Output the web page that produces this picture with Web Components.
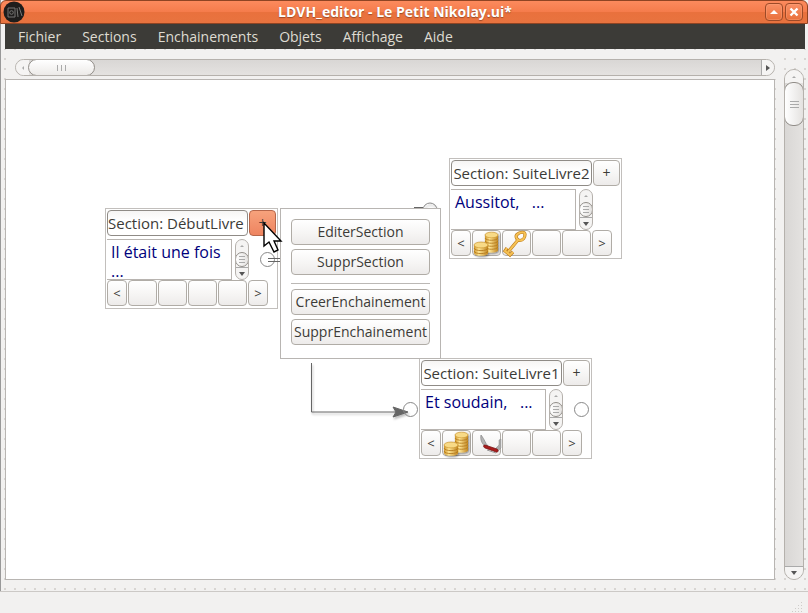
<!DOCTYPE html>
<html lang="fr">
<head>
<meta charset="utf-8">
<title>LDVH_editor - Le Petit Nikolay.ui*</title>
<style>
html, body { height: 100%; margin: 0; }
body { font: 15px/20px "Open Sans", "Noto Sans", sans-serif; color: #3c3b37; background: #f2f1f0; overflow: hidden; }
</style>
</head>
<body>
<ldvh-window></ldvh-window>
<script>
const define = (name, html, setup) => customElements.define(name, class extends HTMLElement {
  connectedCallback() {
    if (this.shadowRoot) return;
    const t = document.createElement('template');
    t.innerHTML = html;
    this.attachShadow({ mode: 'open' }).append(t.content.cloneNode(true));
    if (setup) setup(this, this.shadowRoot);
  }
});

const icons = {
  coins: `<defs><linearGradient id="g"><stop offset="0" stop-color="#cf9426"/><stop offset=".35" stop-color="#ffe695"/><stop offset="1" stop-color="#c08420"/></linearGradient><filter id="s" x="-.3" y="-.3" width="1.6" height="1.6"><feDropShadow dx="1" dy="1" stdDeviation="1.2" flood-opacity=".5"/></filter></defs>
    <g filter="url(#s)"><path d="M12 4v15c0 3.500 13 3.500 13 0V4z" fill="url(#g)"/>
    <path d="M12 7c1 3 12 3 13 0M12 10c1 3 12 3 13 0M12 13c1 3 12 3 13 0M12 16c1 3 12 3 13 0" fill="none" stroke="#b57c1e" stroke-width=".9"/>
    <ellipse cx="18.500" cy="4" rx="6.500" ry="2.800" fill="#f8da86" stroke="#cf9a35" stroke-width=".7"/>
    <path d="M1 14v8c1 4 14 3.500 14 0v-8z" fill="url(#g)"/>
    <path d="M1 17c1 3.500 13 3.500 14 0M1 20c1 3.500 13 3.500 14 0" fill="none" stroke="#b57c1e" stroke-width=".9"/>
    <ellipse cx="8" cy="14" rx="7" ry="2.900" fill="#f8da86" stroke="#cf9a35" stroke-width=".7"/></g>`,
  key: `<g fill="none" stroke="#b9781a" stroke-width="3.200"><path d="M14 3.500c3-3 8-3 8 0s-2 6-5 6-5-4-3-6z"/><path d="M15 9 5 21M4 17l-2 3 5 4 3-3"/></g>
    <g fill="none" stroke="#f6c254" stroke-width="2"><path d="M14 3.500c3-3 8-3 8 0s-2 6-5 6-5-4-3-6z"/><path d="M15 9 5 21M4 17l-2 3 5 4 3-3"/></g>`,
  knife: `<path d="M8 4c-1 5 1 9 5 12l2-1C12 12 12 9 8 4z" fill="#b4b4b4" stroke="#858585" stroke-width=".7"/><path d="m23 17 3-3V9l2-1v9l-3 3z" fill="#aaa" stroke="#888" stroke-width=".5"/><path d="m12 14 12 4c2 1 1 4-1 3l-11-4c-2-1-2-3 0-3z" fill="#a81c1c" stroke="#701010" stroke-width=".7"/><path d="m14 19 9 3" stroke="#999"/>`
};
const face = `border:1px solid #b0aca6; border-radius:4px; background:linear-gradient(#fff,#f6f5f4 55%,#edebea); color:#3c3b37; font:inherit; padding:0; box-sizing:border-box; margin:0;`;

define('title-bar', `<style>
  :host { display:flex; align-items:center; height:24px; box-sizing:border-box; padding:0 4px 0 2px;
    border:1px solid #8f4423; border-radius:6px 6px 0 0; background:linear-gradient(#fc8a5d,#f57c4c 48%,#e9713d 52%,#e8733f); color:#fff; }
  h1 { flex:1; text-align:center; margin:0; font:bold 14px/22px "Open Sans","Noto Sans",sans-serif; text-shadow:0 1px 1px #9a4a28; white-space:nowrap; }
  .app { width:22px; height:22px; }
  nav { display:flex; gap:2px; }
  button { width:18px; height:18px; padding:0; border:1px solid #9c4a28; border-radius:4px; background:linear-gradient(#fa9066,#e9703b); box-shadow:inset 0 0 0 1px #ffa47c66; }
  button svg { display:block; }
</style>
<svg class="app" viewBox="0 0 22 22"><circle cx="11" cy="11" r="10.500" fill="#1e1d1c"/><g fill="none" stroke="#777775"><path d="M5 7h7v9H5zM14 7l1 9M16 6l3 9"/><circle cx="8.500" cy="11.500" r="1.800"/></g></svg>
<h1><slot></slot></h1>
<nav><button aria-label="Agrandir"><svg width="16" height="16"><path d="M4 10h8L8 6z" fill="#fff"/></svg></button><button aria-label="Fermer"><svg width="16" height="16"><path d="m4.500 4.500 7 7m0-7-7 7" stroke="#fff" stroke-width="2.400"/></svg></button></nav>`);

define('menu-bar', `<style>
  :host { display:flex; gap:21px; height:25px; padding:0 13px; margin:0 3px 0 5px; background:#3c3b37; }
  ::slotted(button) { border:0; padding:0; background:none; color:#dfdbd2; font:14px/25px "Open Sans","Noto Sans",sans-serif; }
</style><slot></slot>`);

define('scroll-bar', `<style>
  :host { display:flex; box-sizing:border-box; border:1px solid #b5b1ac; border-radius:10px; background:linear-gradient(#d9d7d5,#e4e2e0); overflow:hidden; }
  :host([vertical]) { flex-direction:column; background:linear-gradient(90deg,#d9d7d5,#e4e2e0); }
  button { flex:none; display:grid; place-items:center; width:13px; padding:0; border:0; background:#f5f4f3; color:#aaa; }
  button:last-child { color:#555; border-left:1px solid #aaa; border-radius:0; }
  :host([vertical]) button { width:100%; height:13px; }
  :host([vertical]) button:last-child { border-left:0; border-top:1px solid #aaa; }
  .thumb { flex:none; width:67px; display:grid; place-items:center; box-sizing:border-box; border:1px solid #918d88; border-radius:9px; background:linear-gradient(#fff,#eceae8); margin:-1px 0 -1px -1px; }
  :host([vertical]) .thumb { width:auto; height:44px; margin:-1px -1px 0; background:linear-gradient(90deg,#fff,#e4e2e0); }
  .grip { width:9px; height:6px; background:repeating-linear-gradient(90deg,#aaa 0 1px,transparent 1px 4px); }
  :host([vertical]) .grip { height:7px; background:repeating-linear-gradient(#aaa 0 1px,transparent 1px 3px); }
  .track { flex:1; }
  :host([mini]) button { height:12px; background:none; border:0; }
  :host([mini]) { background:#f5f4f3; border-radius:8px; justify-content:space-between; }
  :host([mini]) .thumb { height:15px; border-radius:8px; }
  :host([mini]) .grip { width:6px; }
  :host([mini]) .track { display:none; }
</style>
<button tabindex="-1" aria-label="Début"><svg class="a" width="6" height="6"></svg></button><div class="thumb"><i class="grip"></i></div><div class="track"></div><button tabindex="-1" aria-label="Fin"><svg class="b" width="6" height="6"></svg></button>`,
(host, root) => {
  const v = host.hasAttribute('vertical');
  root.querySelector('.a').innerHTML = `<path fill="currentColor" d="${v ? 'M1 4h4L3 2z' : 'M4 1v4L2 3z'}"/>`;
  root.querySelector('.b').innerHTML = `<path fill="currentColor" d="${v ? 'M0 1h6L3 5z' : 'M1 0v6l4-3z'}"/>`;
});

define('section-card', `<style>
  :host { display:block; position:absolute; width:173px; box-sizing:border-box; border:1px solid #c2bfbc; padding:1px 1px 2px; background:#fff; }
  button { ${face} flex:none; }
  .head { display:flex; gap:1px; height:26px; }
  .name { width:141px; font-size:15px; border-color:#8f8b86; background:linear-gradient(#f6f5f4,#fff 40%); white-space:nowrap; }
  :host([flush]) .name { text-align:left; }
  .plus { flex:1; font-size:14px; }
  :host([active]) .plus { background:linear-gradient(#f7a27c,#ee8460); border-color:#b6664a; }
  .body { display:flex; gap:3px; height:41px; margin:3px 0 0; }
  textarea { width:125px; box-sizing:border-box; margin:0; padding:3px 0 0 4px; border:solid #b8b4b0; border-width:1px 1px 1px 0; resize:none; overflow:hidden; background:#fff; color:#00007c; font:500 16px/19px "Open Sans","Noto Sans",sans-serif; }
  scroll-bar { width:14px; }
  .items { display:flex; gap:1px; height:26px; }
  .items button { width:29px; }
  .items .nav { width:20px; font-size:13px; }
  .items svg { display:block; overflow:visible; }
  .port { position:absolute; width:13px; height:13px; border:1px solid #888; border-radius:50%; right:2px; top:43px; }
  .in { right:auto; left:-17px; }
</style>
<div class="head"><button class="name"></button><button class="plus">+</button></div>
<div class="body"><textarea readonly aria-label="Texte de la section"></textarea><scroll-bar vertical mini></scroll-bar></div>
<div class="items"></div>`,
(host, root) => {
  root.querySelector('.name').textContent = host.getAttribute('name');
  root.querySelector('textarea').value = host.getAttribute('text');
  const list = (host.getAttribute('items') || '').split(' ');
  root.querySelector('.items').innerHTML = '<button class="nav" aria-label="Précédent">&lt;</button>' +
    [0, 1, 2, 3].map(i => `<button aria-label="${list[i] || 'Objet vide'}">${icons[list[i]] ? `<svg width="27" height="26" viewBox="0 0 27 26">${icons[list[i]]}</svg>` : ''}</button>`).join('') +
    '<button class="nav" aria-label="Suivant">&gt;</button>';
  for (const p of (host.getAttribute('ports') || '').split(' ').filter(Boolean)) {
    const s = document.createElement('span'); s.className = 'port ' + p; root.append(s);
  }
});

define('context-menu', `<style>
  :host { position:absolute; display:flex; flex-direction:column; gap:4px; width:161px; box-sizing:border-box; padding:10px 10px 13px; border:1px solid #b8b5b2; background:#fff; }
  ::slotted(button) { ${face} height:26px; font-size:14px; white-space:nowrap; }
  ::slotted(hr) { width:100%; height:1px; border:0; margin:4px 0 1px; background:#bbb8b5; }
</style><slot></slot>`);

define('section-canvas', `<style>
  :host { position:relative; display:block; border:1px solid #b8b5b2; background:#fff; overflow:hidden; min-height:0; }
  .links, .pointer { position:absolute; left:0; top:0; }
  .links { filter:drop-shadow(1px 2px 1px #0004); }
</style>
<svg class="links" width="600" height="400" fill="none" stroke="#666"><path d="M305.500 283v49H394"/><path d="m387 327 15 5-15 5 3-5z" fill="#666"/><circle cx="424" cy="130" r="7" stroke="#888"/><path d="M408 127.500h9"/></svg>
<slot></slot>
<svg class="pointer" width="300" height="200"><path d="M262 178.500h12M262 181.500h12" stroke="#666"/><path d="M258 143v23l5-4 5 10 4-2-4-9h7z" fill="#fff" stroke="#000" stroke-width="1.400"/></svg>`);

define('ldvh-window', `<style>
  :host { display:flex; flex-direction:column; height:100vh; background:#f2f1f0; box-shadow:inset 1px 0 #999; }
  main { flex:1; min-height:0; display:grid; grid-template-columns:1fr 20px; grid-template-rows:17px 1fr; column-gap:9px; row-gap:3px; padding:10px 4px 11px 5px;
    background:linear-gradient(#f2f1f0,#f2f1f0) 10px 4px / calc(100% - 40px) 26px no-repeat, radial-gradient(circle,#d8d5d2 0 1px,transparent 1px) 0 5px / 10px 10px; }
  .h { margin-left:10px; }
  .v { grid-column:2; grid-row:1 / 3; margin-top:10px; }
  section-canvas { grid-column:1; grid-row:2; }
  footer { height:21px; border-top:1px solid #ccc9c6; background:#f2f1f0; display:flex; justify-content:end; align-items:end; padding-right:4px; }
</style>
<title-bar>LDVH_editor - Le Petit Nikolay.ui*</title-bar>
<menu-bar><button>Fichier</button><button>Sections</button><button>Enchainements</button><button>Objets</button><button>Affichage</button><button>Aide</button></menu-bar>
<main>
  <scroll-bar class="h"></scroll-bar>
  <scroll-bar class="v" vertical></scroll-bar>
  <section-canvas>
    <section-card style="left:443px;top:78px" name="Section: SuiteLivre2" text="Aussitot,   ..." items="coins key"></section-card>
    <section-card style="left:413px;top:278px" name="Section: SuiteLivre1" text="Et soudain,   ..." items="coins knife" ports="in out"></section-card>
    <section-card style="left:99px;top:128px" flush active name="Section: DébutLivre" text="Il était une fois
..." ports="out"></section-card>
    <context-menu style="left:274px;top:128px"><button>EditerSection</button><button>SupprSection</button><hr><button>CreerEnchainement</button><button>SupprEnchainement</button></context-menu>
  </section-canvas>
</main>
<footer><svg width="12" height="12" stroke="#cfccc9" stroke-dasharray="1 2"><path d="M9 1.500h3M6 4.500h6M3 7.500h9M0 10.500h12"/></svg></footer>`);
</script>
</body>
</html>
